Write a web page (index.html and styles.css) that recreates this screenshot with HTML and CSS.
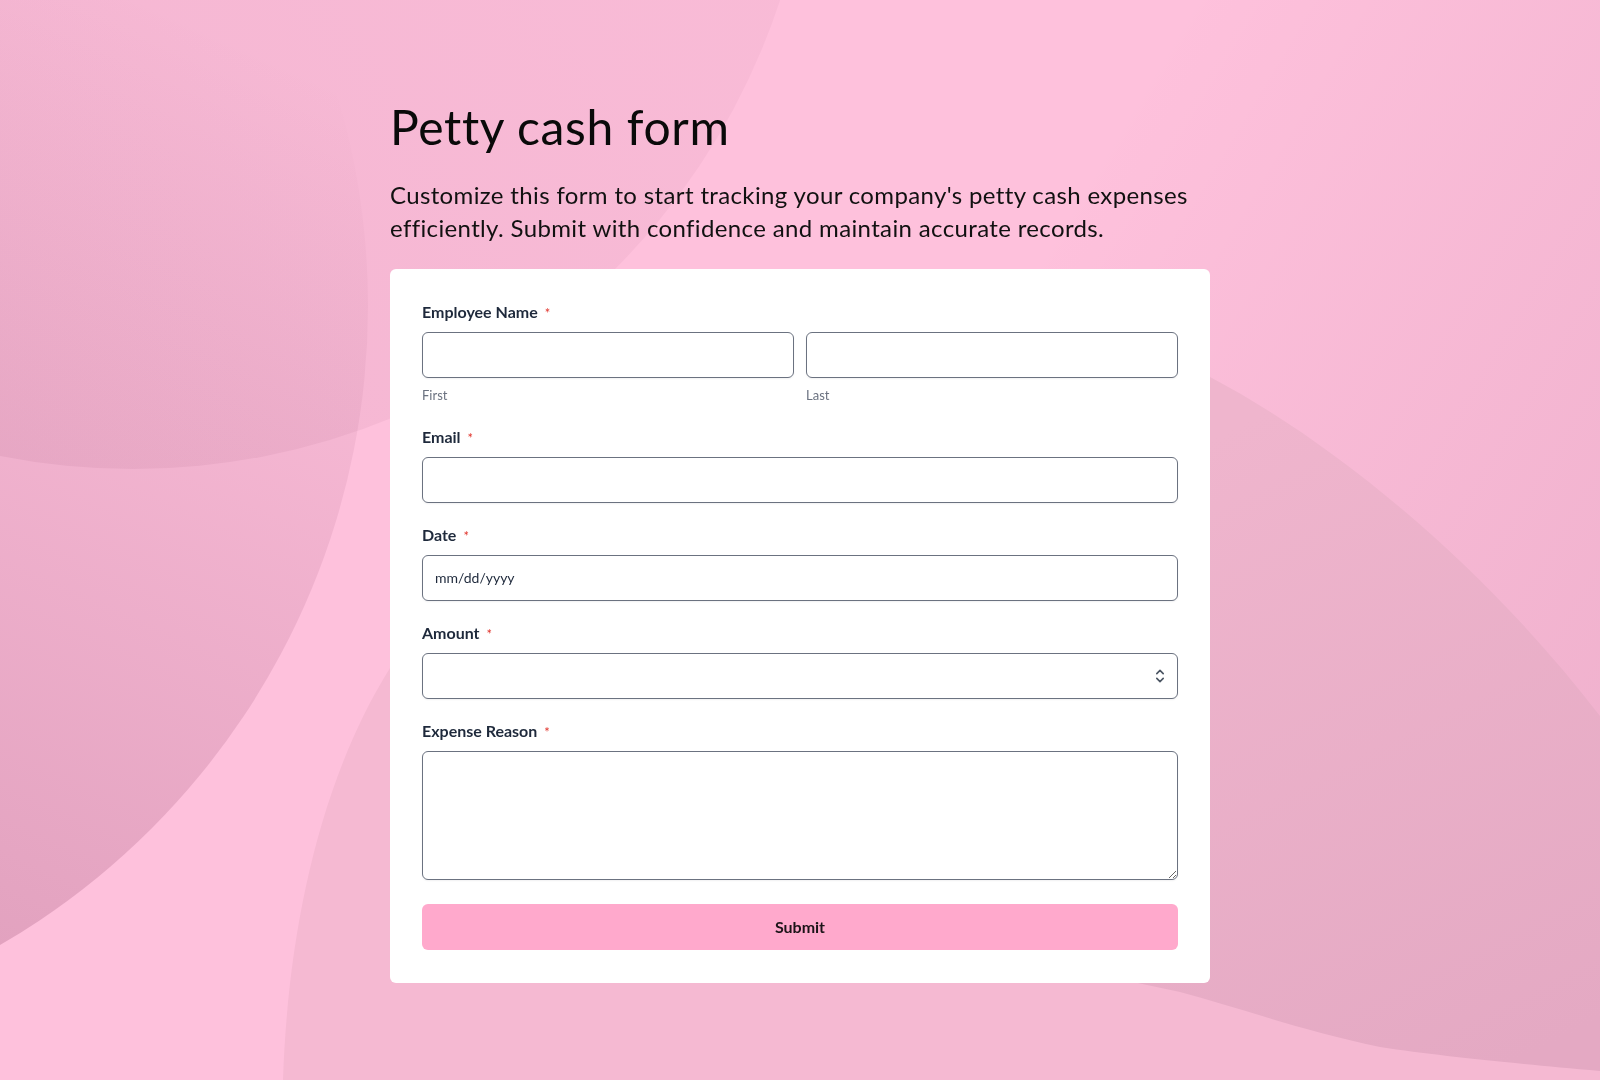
FILE: index.html
```html
<!DOCTYPE html>
<html lang="en">
<head>
<meta charset="utf-8">
<title>Petty cash form</title>
<link rel="stylesheet" href="styles.css">
</head>
<body>
<svg class="backdrop" viewBox="0 0 1600 1080" preserveAspectRatio="none" aria-hidden="true">
  <defs>
    <linearGradient id="gA" gradientUnits="userSpaceOnUse" x1="380" y1="100" x2="0" y2="950">
      <stop offset="0" stop-color="#5a0a32" stop-opacity="0"/>
      <stop offset="1" stop-color="#5a0a32" stop-opacity="0.17"/>
    </linearGradient>
    <linearGradient id="gB" gradientUnits="userSpaceOnUse" x1="700" y1="0" x2="0" y2="460">
      <stop offset="0" stop-color="#5a0a32" stop-opacity="0.035"/>
      <stop offset="1" stop-color="#5a0a32" stop-opacity="0.06"/>
    </linearGradient>
    <linearGradient id="gE" gradientUnits="userSpaceOnUse" x1="1180" y1="0" x2="1800" y2="372">
      <stop offset="0" stop-color="#5a0a32" stop-opacity="0"/>
      <stop offset="1" stop-color="#5a0a32" stop-opacity="0.08"/>
    </linearGradient>
    <linearGradient id="gD" gradientUnits="userSpaceOnUse" x1="1250" y1="420" x2="1560" y2="1040">
      <stop offset="0" stop-color="#efb5cd"/>
      <stop offset="1" stop-color="#e4a9c3"/>
    </linearGradient>
  </defs>
  <rect x="0" y="0" width="1600" height="1080" fill="#fec1dc"/>
  <rect x="0" y="0" width="1600" height="1080" fill="url(#gE)"/>
  <path d="M283 1090 L283 1080 C288 930 320 780 390 668 L800 600 L1120 960 L1180 985 C1300 1015 1450 1050 1610 1060 L1610 1090 Z" fill="#f5b9d2"/>
  <path d="M1000 340 L1210 377 C1330 440 1480 560 1600 716 L1660 800 L1660 1075 L1600 1071 C1500 1062 1440 1056 1380 1047 C1300 1030 1240 1008 1180 992 L1100 975 L900 900 Z" fill="url(#gD)"/>
  <circle cx="-371" cy="306" r="739" fill="url(#gA)"/>
  <circle cx="133" cy="-212" r="681" fill="url(#gB)"/>
</svg>

<main class="page">
  <h1 class="title">Petty cash form</h1>
  <p class="intro">Customize this form to start tracking your company's petty cash expenses efficiently. Submit with confidence and maintain accurate records.</p>

  <form class="card">
    <div class="field">
      <div class="label">Employee Name<span class="req">*</span></div>
      <div class="name-row">
        <div class="name-part">
          <input class="control" type="text" aria-label="First">
          <span class="hint">First</span>
        </div>
        <div class="name-part">
          <input class="control" type="text" aria-label="Last">
          <span class="hint">Last</span>
        </div>
      </div>
    </div>

    <div class="field">
      <label class="label" for="email">Email<span class="req">*</span></label>
      <input class="control" id="email" type="email">
    </div>

    <div class="field">
      <label class="label" for="date">Date<span class="req">*</span></label>
      <input class="control date" id="date" type="text" placeholder="mm/dd/yyyy">
    </div>

    <div class="field">
      <label class="label" for="amount">Amount<span class="req">*</span></label>
      <div class="number-wrap">
        <input class="control" id="amount" type="number">
        <svg class="spinner" width="10" height="16" viewBox="0 0 10 16" aria-hidden="true">
          <path d="M1.8 5.6 L5 2.4 L8.2 5.6" fill="none" stroke="#4b5563" stroke-width="1.6" stroke-linecap="round" stroke-linejoin="round"/>
          <path d="M1.8 10.4 L5 13.6 L8.2 10.4" fill="none" stroke="#4b5563" stroke-width="1.6" stroke-linecap="round" stroke-linejoin="round"/>
        </svg>
      </div>
    </div>

    <div class="field">
      <label class="label" for="reason">Expense Reason<span class="req">*</span></label>
      <textarea class="control area" id="reason"></textarea>
    </div>

    <button class="submit" type="button">Submit</button>
  </form>
</main>
</body>
</html>
```

FILE: styles.css
```css
* {
  box-sizing: border-box;
}

html,
body {
  margin: 0;
  height: 100%;
}

body {
  font-family: Lato, "Noto Sans", sans-serif;
  font-variant-ligatures: none;
  background: #fec1dc;
  color: #111111;
  overflow: hidden;
}

.backdrop {
  position: fixed;
  inset: 0;
  width: 100%;
  height: 100%;
  display: block;
  z-index: 0;
}

.page {
  position: relative;
  z-index: 1;
  width: 820px;
  margin: 0 auto;
  padding-top: 98px;
}

.title {
  margin: 0;
  font-size: 48px;
  line-height: 1.2;
  font-weight: 400;
  letter-spacing: 0.65px;
  color: #0a0a0a;
}

.intro {
  margin: 22px 0 25px;
  font-size: 24px;
  line-height: 33px;
  letter-spacing: 0.36px;
  color: #111111;
}

.card {
  background: #ffffff;
  border-radius: 6px;
  padding: 31px 32px 33px;
  display: flex;
  flex-direction: column;
  gap: 20px;
}

.label {
  display: block;
  font-size: 16px;
  line-height: 24px;
  font-weight: 700;
  color: #1e293b;
  margin-bottom: 8px;
}

.req {
  color: #e0342c;
  font-size: 13px;
  line-height: 1;
  font-weight: 400;
  margin-left: 7px;
}

.name-row {
  display: grid;
  grid-template-columns: 1fr 1fr;
  gap: 12px;
}

.control {
  display: block;
  width: 100%;
  height: 46px;
  margin: 0;
  border: 1px solid #6b7280;
  border-radius: 6px;
  background: #ffffff;
  padding: 0 12px;
  font-family: Lato, "Noto Sans", sans-serif;
  font-size: 14px;
  color: #1e293b;
  box-shadow: 0 1px 2px rgba(15, 23, 42, 0.06);
  outline: none;
}

.date::placeholder {
  color: #1e293b;
  opacity: 1;
}

.hint {
  display: block;
  margin-top: 8px;
  font-size: 13px;
  line-height: 19px;
  color: #6b7280;
}

.number-wrap {
  position: relative;
}

.number-wrap input::-webkit-inner-spin-button,
.number-wrap input::-webkit-outer-spin-button {
  -webkit-appearance: none;
  margin: 0;
}

.number-wrap input {
  -moz-appearance: textfield;
  padding-right: 36px;
}

.spinner {
  position: absolute;
  right: 13px;
  top: 15px;
  pointer-events: none;
}

.area {
  height: 129px;
  padding: 10px 12px;
  resize: both;
}

.submit {
  margin-top: 4px;
  height: 46px;
  width: 100%;
  border: none;
  border-radius: 6px;
  background: #ffa9cc;
  font-family: Lato, "Noto Sans", sans-serif;
  font-size: 16px;
  font-weight: 700;
  color: #1c1418;
  cursor: pointer;
}
```
